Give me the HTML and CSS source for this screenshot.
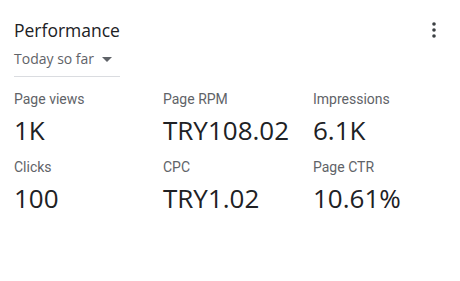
FILE: index.html
```html
<!DOCTYPE html>
<html lang="en">
<head>
  <meta charset="UTF-8" />
  <title>Performance</title>
  <link rel="stylesheet" href="styles.css">
</head>
<body>
  <div class="card">
    <div class="card-header">
      <div class="title">Performance</div>
      <button class="menu" aria-label="More">
        <svg width="4" height="16" viewBox="0 0 4 16">
          <circle cx="2" cy="2" r="1.8" fill="#3c4043"/>
          <circle cx="2" cy="8" r="1.8" fill="#3c4043"/>
          <circle cx="2" cy="14" r="1.8" fill="#3c4043"/>
        </svg>
      </button>
    </div>

    <div class="range">
      <span>Today so far</span>
      <svg width="10" height="5" viewBox="0 0 10 5"><path d="M0 0 L10 0 L5 5 Z" fill="#5f6368"/></svg>
    </div>

    <div class="metrics">
      <div class="metric">
        <div class="label">Page views</div>
        <div class="value">1K</div>
      </div>
      <div class="metric">
        <div class="label">Page RPM</div>
        <div class="value">TRY108.02</div>
      </div>
      <div class="metric">
        <div class="label">Impressions</div>
        <div class="value">6.1K</div>
      </div>
      <div class="metric">
        <div class="label">Clicks</div>
        <div class="value">100</div>
      </div>
      <div class="metric">
        <div class="label">CPC</div>
        <div class="value">TRY1.02</div>
      </div>
      <div class="metric">
        <div class="label">Page CTR</div>
        <div class="value">10.61%</div>
      </div>
    </div>
  </div>
</body>
</html>
```

FILE: styles.css
```css
body {
  margin: 0;
  background-color: #fff;
  font-family: Roboto, Arial, sans-serif;
  color: #202124;
}

.card {
  padding: 18px 14px 0 14px;
}

.card-header {
  display: flex;
  justify-content: space-between;
  align-items: center;
  height: 24px;
}

.title {
  font-family: "Open Sans", Arial, sans-serif;
  font-size: 17.5px;
  line-height: 24px;
  color: #202124;
}

.menu {
  border: none;
  background: none;
  padding: 0;
  width: 24px;
  height: 24px;
  display: flex;
  align-items: center;
  justify-content: center;
}

.range {
  display: flex;
  align-items: center;
  gap: 8px;
  width: 106px;
  margin-top: 7px;
  padding-bottom: 7px;
  border-bottom: 1px solid #dadce0;
  font-family: "Open Sans", Arial, sans-serif;
  font-size: 14px;
  font-weight: 500;
  line-height: 20px;
  color: #5f6368;
}

.metrics {
  display: grid;
  grid-template-columns: 149px 150px 1fr;
  row-gap: 9px;
  margin-top: 12px;
}

.label {
  font-size: 14px;
  line-height: 20px;
  color: #5f6368;
}

.value {
  font-family: "Open Sans", Arial, sans-serif;
  font-size: 26px;
  line-height: 36px;
  color: #202124;
  margin-top: 3px;
}
```
